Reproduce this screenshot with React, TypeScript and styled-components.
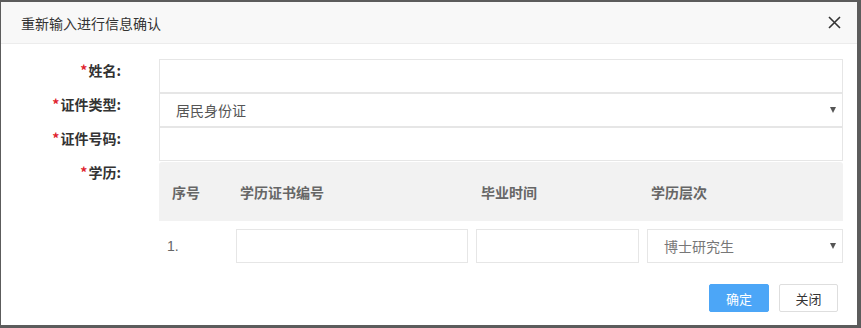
import React from "react";
import styled, { createGlobalStyle } from "styled-components";

const Global = createGlobalStyle`
  html, body { margin: 0; padding: 0; background: #5c5c5c; }
  body { font-family: "Microsoft YaHei", "Noto Sans CJK SC", "Noto Sans", sans-serif; }
  * { box-sizing: border-box; }
`;

const Dialog = styled.div`
  margin: 2px 4px 0 1px;
  width: 856px;
  height: 323px;
  background: #fff;
  display: flex;
  flex-direction: column;
`;

const Header = styled.div`
  height: 42px;
  flex: none;
  background: #f8f8f8;
  border-bottom: 1px solid #ececec;
  display: flex;
  align-items: center;
  justify-content: space-between;
  padding: 0 16px 0 20px;
`;

const Title = styled.div`
  font-size: 14px;
  color: #333;
`;

const Close = styled.button`
  border: 0;
  background: none;
  padding: 0;
  width: 14px;
  height: 14px;
  display: flex;
  align-items: center;
  justify-content: center;
  cursor: pointer;
`;

const Body = styled.div`
  padding: 15px 14px 0 0;
  display: flex;
  flex-direction: column;
`;

const Row = styled.div`
  display: grid;
  grid-template-columns: 120px 1fr;
  column-gap: 38px;
`;

const Label = styled.div`
  text-align: right;
  font-size: 14px;
  font-weight: bold;
  color: #333;
  line-height: 20px;
  padding-top: 1px;
  white-space: nowrap;
`;

const Star = styled.span`
  color: #e0232e;
  margin-right: 1px;
`;

const Input = styled.div<{ $h?: number }>`
  height: ${(p) => p.$h ?? 34}px;
  border: 1px solid #e6e6e6;
  background: #fff;
  display: flex;
  align-items: center;
  padding: 0 16px;
  font-size: 14px;
  color: #555;
  position: relative;
`;

const Arrow = styled.span`
  position: absolute;
  right: 6px;
  top: 50%;
  margin-top: -3px;
  width: 0;
  height: 0;
  border-left: 3.5px solid transparent;
  border-right: 3.5px solid transparent;
  border-top: 6px solid #555;
`;

const Table = styled.div`
  margin-top: 1px;
  display: flex;
  flex-direction: column;
`;

const TRow = styled.div<{ $head?: boolean }>`
  display: grid;
  grid-template-columns: 77px 240px 171px 1fr;
  align-items: center;
  height: ${(p) => (p.$head ? 59 : 50)}px;
  background: ${(p) => (p.$head ? "#f2f2f2" : "transparent")};
  border-radius: ${(p) => (p.$head ? "3px 3px 0 0" : "0")};
  ${(p) => (p.$head ? "" : "padding-top: 8px; align-items: start;")}
`;

const Th = styled.div<{ $pl: number }>`
  padding-left: ${(p) => p.$pl}px;
  font-size: 14px;
  font-weight: bold;
  color: #666;
`;

const Td = styled.div<{ $pr?: number }>`
  padding-right: ${(p) => p.$pr ?? 0}px;
`;

const Index = styled.div`
  padding-left: 8px;
  height: 34px;
  display: flex;
  align-items: center;
  font-family: "Liberation Sans", Arial, sans-serif;
  font-size: 14px;
  color: #666;
`;

const Footer = styled.div`
  display: flex;
  justify-content: flex-end;
  gap: 10px;
  padding: 13px 5px 0 0;
`;

const Button = styled.button<{ $primary?: boolean }>`
  height: 28px;
  width: ${(p) => (p.$primary ? 60 : 59)}px;
  border-radius: 2px;
  font-family: "Microsoft YaHei", "Noto Sans CJK SC", sans-serif;
  font-size: 13px;
  padding: 0;
  cursor: pointer;
  border: 1px solid ${(p) => (p.$primary ? "#4ca6f7" : "#dedede")};
  background: ${(p) => (p.$primary ? "#4ca6f7" : "#fff")};
  color: ${(p) => (p.$primary ? "#fff" : "#333")};
`;

export default function App() {
  return (
    <>
      <Global />
      <Dialog>
        <Header>
          <Title>重新输入进行信息确认</Title>
          <Close aria-label="close">
            <svg width="13" height="13" viewBox="0 0 13 13">
              <path d="M1 1L12 12M12 1L1 12" stroke="#333" strokeWidth="1.6" />
            </svg>
          </Close>
        </Header>
        <Body>
          <Row>
            <Label>
              <Star>*</Star>姓名:
            </Label>
            <Input />
          </Row>
          <Row>
            <Label>
              <Star>*</Star>证件类型:
            </Label>
            <Input>
              居民身份证
              <Arrow />
            </Input>
          </Row>
          <Row>
            <Label>
              <Star>*</Star>证件号码:
            </Label>
            <Input />
          </Row>
          <Row>
            <Label>
              <Star>*</Star>学历:
            </Label>
            <Table>
              <TRow $head>
                <Th $pl={13}>序号</Th>
                <Th $pl={4}>学历证书编号</Th>
                <Th $pl={5}>毕业时间</Th>
                <Th $pl={4}>学历层次</Th>
              </TRow>
              <TRow>
                <Index>1.</Index>
                <Td $pr={8}>
                  <Input />
                </Td>
                <Td $pr={8}>
                  <Input />
                </Td>
                <Td>
                  <Input style={{ color: "#777" }}>
                    博士研究生
                    <Arrow />
                  </Input>
                </Td>
              </TRow>
            </Table>
          </Row>
          <Footer>
            <Button $primary>确定</Button>
            <Button>关闭</Button>
          </Footer>
        </Body>
      </Dialog>
    </>
  );
}
